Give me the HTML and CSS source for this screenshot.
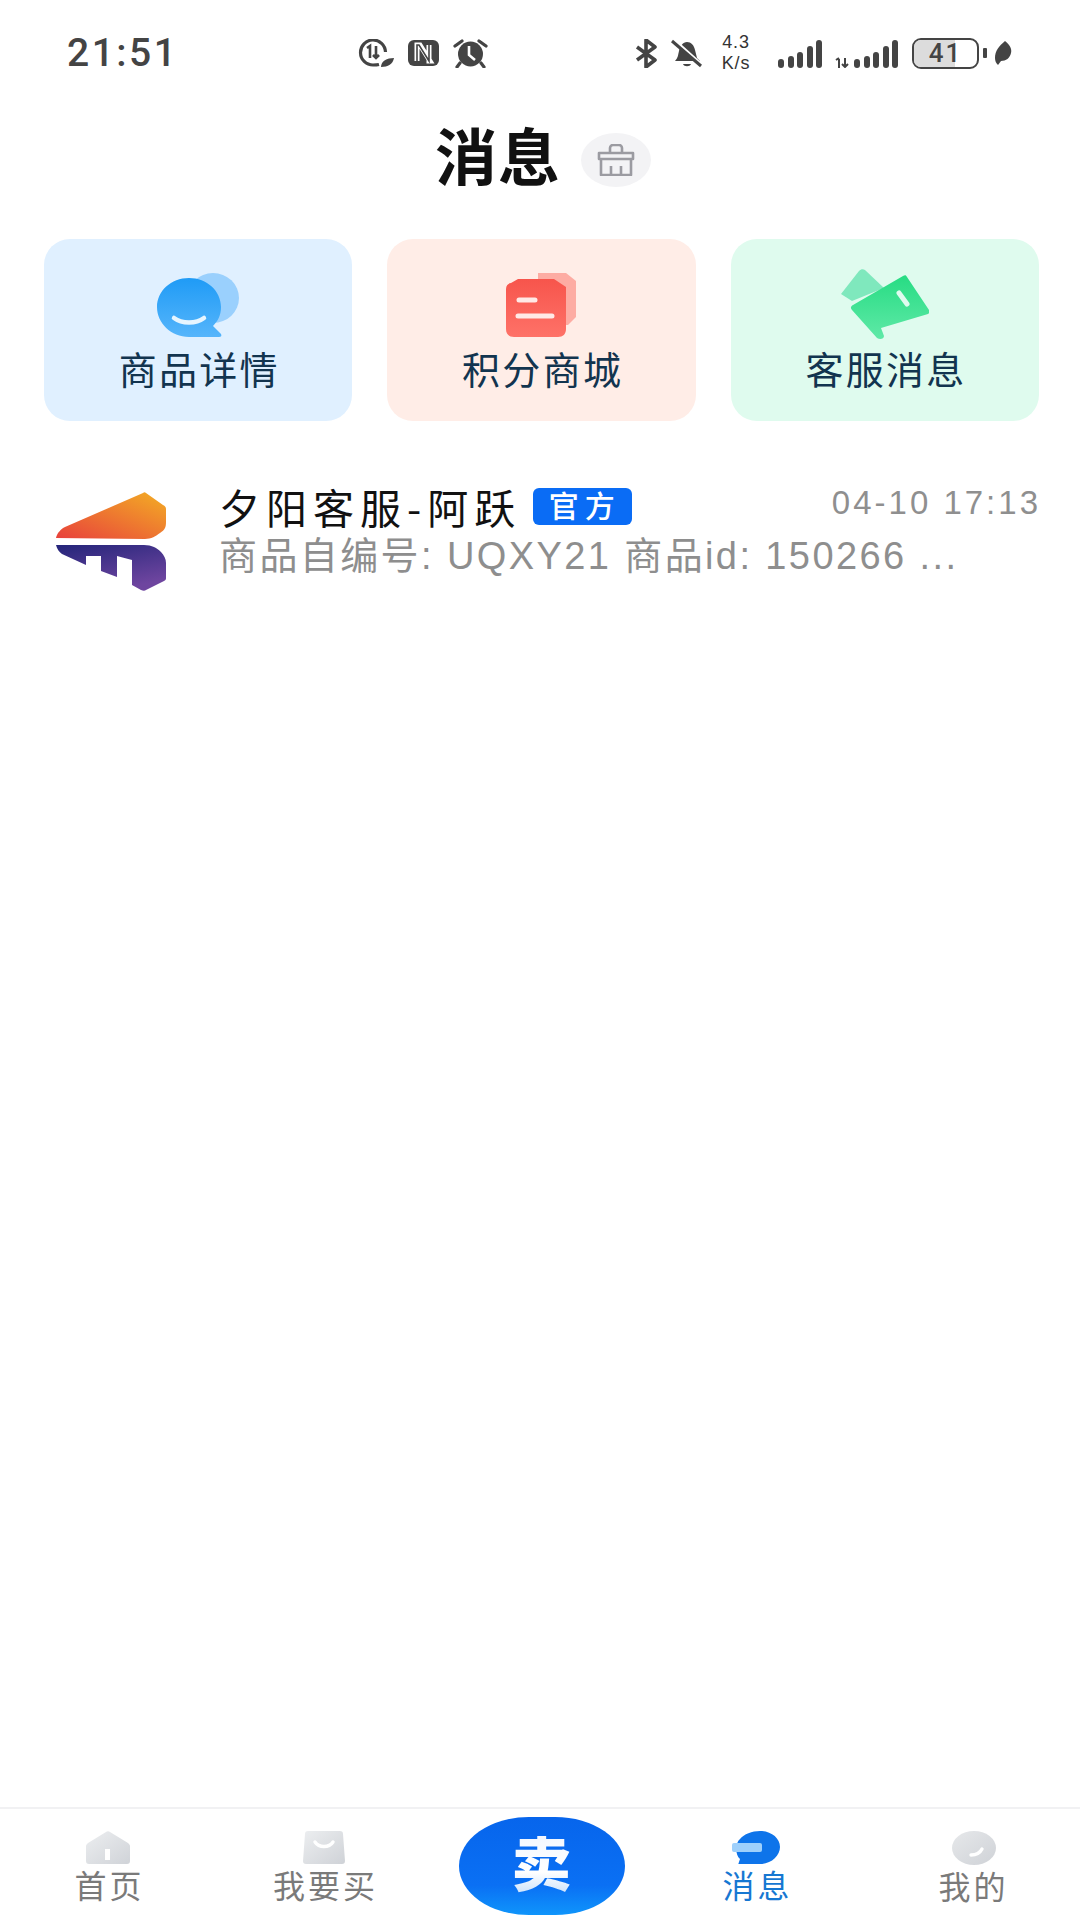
FILE: index.html
```html
<!DOCTYPE html>
<html lang="zh-CN">
<head>
<meta charset="utf-8">
<title>消息</title>
<link rel="stylesheet" href="styles.css">
</head>
<body>
<div class="app">
  <header class="status">
    <span class="clock">21:51</span>
    <div class="status-mid">
      <svg class="si" width="37" height="28" viewBox="0 0 37 28"><path d="M22 25.5C20 26 18 26 16 26A12.5 12.5 0 1 1 28.500 13" fill="none" stroke="#444" stroke-width="3.200"/><path d="M10 9l3-2v12M19 7v12m-3-3l3 3 3-3" fill="none" stroke="#444" stroke-width="2.600"/><path d="M24 28c0-6 6-9 13-9-1 6-6 9-13 9z" fill="#444"/></svg>
      <svg class="si" width="31" height="26" viewBox="0 0 31 26"><rect width="31" height="26" rx="6" fill="#444"/><path d="M9 21V5h3l10 16h-1V5" fill="none" stroke="#fff" stroke-width="5"/><path d="M9 21V5h2l10 16V5" fill="none" stroke="#444" stroke-width="1.600"/></svg>
      <svg class="si" width="35" height="29" viewBox="0 0 35 29"><circle cx="17.500" cy="15" r="12.500" fill="#444"/><path d="M16 7v9l6 5" fill="none" stroke="#fff" stroke-width="2.600"/><path d="M2 7l7-5M33 7l-7-5M7 24l-3 4M28 24l3 4" stroke="#444" stroke-width="3.200" stroke-linecap="round"/></svg>
    </div>
    <div class="status-right">
      <svg class="si" width="23" height="29" viewBox="0 0 23 29"><path d="M2 21L20 8 11 1v27l9-7L2 8" fill="none" stroke="#444" stroke-width="3.600" stroke-linejoin="round"/></svg>
      <svg class="si bell" width="31" height="29" viewBox="0 0 31 29"><path d="M4 22c3-3 3-6 4-10 1-5 4-9 8-9s7 3 8 8l2 8 3 3z" fill="#444"/><path d="M12 25h8c-1 3-7 3-8 0z" fill="#444"/><path d="M1 -1l29 26" stroke="#fff" stroke-width="3"/><path d="M1 2l29 25" stroke="#444" stroke-width="3"/></svg>
      <div class="speed"><span>4.3</span><span>K/s</span></div>
      <div class="bars"><i class="h1"></i><i class="h2"></i><i class="h3"></i><i class="h4"></i><i class="h5"></i></div>
      <div class="sig2">
        <svg class="si" width="15" height="11" viewBox="0 0 15 11"><path d="M4 2v9M1 3l3-2M10 1v9m-3-3l3 3 3-3" fill="none" stroke="#444" stroke-width="2"/></svg>
        <div class="bars"><i class="h1"></i><i class="h2"></i><i class="h3"></i><i class="h4"></i><i class="h5"></i></div>
      </div>
      <div class="battery"><div class="batt-fill"></div><span class="batt-num">41</span></div>
      <span class="batt-cap"></span>
      <svg class="si" width="18" height="24" viewBox="0 0 18 24"><path d="M11 0c5 4 7 8 6 12-1 5-5 8-10 8l-3 4c-2-2-3-4-3-7C1 10 5 5 11 0z" fill="#444"/></svg>
    </div>
  </header>

  <div class="title-row">
    <h1 class="title">消息</h1>
    <div class="basket">
      <svg width="38" height="32" viewBox="0 0 38 32"><path d="M13 9V4a3 3 0 0 1 3-3h6a3 3 0 0 1 3 3v5M2 9h34v6H2zM4 15v16h30V15M14 31v-9M24 31v-9" fill="none" stroke="#9b9ba1" stroke-width="2.600" stroke-linejoin="round"/></svg>
    </div>
  </div>

  <section class="cards">
    <div class="card card-blue">
      <svg class="card-icon" width="82" height="64" viewBox="0 0 82 64">
        <defs>
          <linearGradient id="gb" x1="0" y1="0" x2="0" y2="1"><stop offset="0" stop-color="#1f9bf6"/><stop offset="1" stop-color="#56b5fb"/></linearGradient>
        </defs>
        <ellipse cx="56" cy="25" rx="26" ry="25" fill="#9ad0fd"/>
        <path d="M32 5c18 0 32 13 32 29 0 8-3 14-8 19l8 8c1 2 0 3-2 3H32C14 64 0 50 0 34 0 18 14 5 32 5z" fill="url(#gb)"/>
        <path d="M17 45c8 6 22 6 30 0" fill="none" stroke="#e6f5ff" stroke-width="4.500" stroke-linecap="round"/>
      </svg>
      <span class="card-label">商品详情</span>
    </div>
    <div class="card card-red">
      <svg class="card-icon" width="70" height="64" viewBox="0 0 70 64">
        <defs>
          <linearGradient id="gr" x1="0" y1="0" x2="0" y2="1"><stop offset="0" stop-color="#f7554c"/><stop offset="1" stop-color="#fe7268"/></linearGradient>
        </defs>
        <path d="M32 0h28l10 8v36l-8 8H32z" fill="#fdaca3"/>
        <path d="M12 6h36l12 8v42c0 5-3 8-8 8H8c-5 0-8-3-8-8V16c0-4 3-6 5-6z" fill="url(#gr)"/>
        <path d="M13 27h16M12 43h34" stroke="#ffe9e6" stroke-width="5" stroke-linecap="round"/>
      </svg>
      <span class="card-label">积分商城</span>
    </div>
    <div class="card card-green">
      <svg class="card-icon card-icon-green" width="88" height="72" viewBox="0 0 88 72">
        <defs>
          <linearGradient id="gg" x1="0" y1="0" x2="0" y2="1"><stop offset="0" stop-color="#27dc83"/><stop offset="1" stop-color="#5fe9a7"/></linearGradient>
        </defs>
        <path d="M0 26L18 3c2-2 4-2 6-1l19 18-32 13z" fill="#7fe8bd"/>
        <path d="M12 37L62 8c2-1 3-1 4 1l22 33c1 2 1 3-1 4L40 60l3 8c0 3-4 4-7 2L11 42c-2-2-1-4 1-5z" fill="url(#gg)"/>
        <path d="M58 25l8 11" stroke="#dffbef" stroke-width="5" stroke-linecap="round"/>
      </svg>
      <span class="card-label">客服消息</span>
    </div>
  </section>

  <section class="list">
    <article class="row">
      <svg class="logo" width="112" height="100" viewBox="0 -1 112 100">
        <defs>
          <linearGradient id="lu" x1="0" y1="1" x2="1" y2="0"><stop offset="0" stop-color="#e8403c"/><stop offset="1" stop-color="#f3ae24"/></linearGradient>
          <linearGradient id="ll" x1="0" y1="0" x2="0.5" y2="1"><stop offset="0" stop-color="#24257a"/><stop offset="1" stop-color="#6e459f"/></linearGradient>
        </defs>
        <path d="M1 45C2 40 6 36 10 34L88 0c1-1 2-1 3 0l17 12c2 1 3 2 3 4v13c0 5-1 8-6 11-4 3-9 6-15 6z" fill="url(#lu)"/>
        <path d="M1 52h88c8 0 13 3 17 7 3 3 5 7 5 11v15c0 1 0 2-2 3L91 97c-1 1-3 1-5 0l-9-5V67l-15-4v21l-16-6V63H31v9L7 61c-3-2-5-5-6-9z" fill="url(#ll)"/>
      </svg>
      <div class="row-body">
        <div class="row-top">
          <span class="name">夕阳客服-阿跃</span>
          <span class="badge">官方</span>
          <span class="time">04-10 17:13</span>
        </div>
        <p class="preview">商品自编号: UQXY21 商品id: 150266 ...</p>
      </div>
    </article>
  </section>

  <nav class="tabs">
    <div class="tab">
      <svg width="44" height="33" viewBox="0 0 44 33">
        <defs><linearGradient id="gt" x1="0" y1="0" x2="1" y2="1"><stop offset="0" stop-color="#eceef0"/><stop offset="1" stop-color="#d0d3d8"/></linearGradient></defs>
        <path d="M2 12L20 1c1-1 3-1 4 0l18 11c1 1 2 2 2 3v15c0 2-1 3-3 3H3c-2 0-3-1-3-3V15c0-1 1-2 2-3z" fill="url(#gt)"/>
        <rect x="19" y="18" width="5" height="11" fill="#fff"/>
      </svg>
      <span class="tab-label">首页</span>
    </div>
    <div class="tab">
      <svg width="42" height="33" viewBox="0 0 42 33">
        <defs><linearGradient id="gt2" x1="0" y1="0" x2="1" y2="1"><stop offset="0" stop-color="#eceef0"/><stop offset="1" stop-color="#cfd2d7"/></linearGradient></defs>
        <path d="M5 0h32c2 0 3 1 3 3l2 27c0 2-1 3-3 3H3c-2 0-3-1-3-3L2 3c0-2 1-3 3-3z" fill="url(#gt2)"/>
        <path d="M12 11c4 6 14 6 18 0" fill="none" stroke="#fff" stroke-width="3.400" stroke-linecap="round"/>
      </svg>
      <span class="tab-label">我要买</span>
    </div>
    <div class="tab">
      <div class="sell"><span class="sell-text">卖</span></div>
    </div>
    <div class="tab">
      <svg width="48" height="33" viewBox="0 0 48 33">
        <path d="M28 0c11 0 20 7 20 16s-9 17-20 17H10l-4 1 2-6C3 24 3 12 8 8c4-5 12-8 20-8z" fill="#0e74ea"/>
        <rect x="0" y="12" width="30" height="9" rx="2" fill="#9fd0fb"/>
      </svg>
      <span class="tab-label active">消息</span>
    </div>
    <div class="tab tab-me">
      <svg width="44" height="34" viewBox="0 0 44 34">
        <defs><linearGradient id="gt3" x1="0" y1="0" x2="1" y2="1"><stop offset="0" stop-color="#e6e8ea"/><stop offset="1" stop-color="#cfd2d7"/></linearGradient></defs>
        <ellipse cx="22" cy="17" rx="22" ry="17" fill="url(#gt3)"/>
        <path d="M19 24c5 0 9-2 11-6" fill="none" stroke="#fff" stroke-width="3.400" stroke-linecap="round"/>
      </svg>
      <span class="tab-label">我的</span>
    </div>
  </nav>
</div>
</body>
</html>
```

FILE: styles.css
```css
* { box-sizing: border-box; }
html, body { margin: 0; padding: 0; background: #fff; }
body { font-family: "Liberation Sans", "Noto Sans CJK SC", sans-serif; }
.app { width: 1080px; height: 1920px; display: flex; flex-direction: column; overflow: hidden; }

.status { height: 104px; padding: 2px 68px 0 67px; display: flex; align-items: center; color: #444; flex: none; }
.clock { font-family: Roboto, sans-serif; font-weight: 500; font-size: 39px; letter-spacing: 2.500px; width: 292px; }
.status-mid { display: flex; align-items: center; gap: 14px; width: 279px; }
.status-right { display: flex; align-items: center; }
.si { display: block; flex: none; }
.bell { margin-left: 13px; }
.speed { display: flex; flex-direction: column; align-items: center; font-family: "Liberation Sans", sans-serif; font-size: 18px; line-height: 21px; width: 38px; margin: 0 23px 0 15px; letter-spacing: .8px; color: #333; }
.bars { display: flex; align-items: flex-end; gap: 3.500px; height: 29px; }
.bars i { display: block; width: 6px; background: #444; border-radius: 3px; }
.h1 { height: 9px; }
.h2 { height: 12px; }
.h3 { height: 16px; }
.h4 { height: 22px; }
.h5 { height: 28px; }
.sig2 { display: flex; align-items: flex-end; gap: 4px; margin-left: 13px; }
.battery { position: relative; margin-left: 14px; width: 67px; height: 31px; border: 2.500px solid #444; border-radius: 9px; overflow: hidden; display: flex; align-items: center; justify-content: center; }
.batt-fill { position: absolute; left: 0; top: 0; bottom: 0; width: 41px; background: #dcdcdc; }
.batt-num { position: relative; font-family: Roboto, sans-serif; font-weight: 500; font-size: 26px; letter-spacing: 2px; color: #444; }
.batt-cap { width: 4px; height: 10px; background: #444; border-radius: 1px; margin: 0 7px 0 4px; }

.title-row { height: 100px; flex: none; display: flex; align-items: center; justify-content: center; padding: 12px 0 0 6px; gap: 20px; }
.title { margin: 0; font-size: 62px; font-weight: 700; line-height: 1; letter-spacing: 1px; color: #111; }
.basket { width: 70px; height: 54px; border-radius: 50%; background: #f3f3f5; display: flex; align-items: center; justify-content: center; }

.cards { flex: none; margin-top: 35px; padding: 0 41px 0 44px; display: grid; grid-template-columns: repeat(3, 1fr); gap: 35px; }
.card { height: 182px; border-radius: 26px; display: flex; flex-direction: column; align-items: center; justify-content: flex-end; padding-bottom: 30px; }
.card-blue { background: #e0f0ff; }
.card-red { background: #ffede7; }
.card-green { background: #dffbee; }
.card-icon { display: block; margin-bottom: 14px; }
.card-icon-green { margin-bottom: 11px; }
.card-label { font-size: 38px; line-height: 40px; letter-spacing: 2.300px; margin-right: -2.300px; color: #12344f; }

.list { flex: 1; padding: 61px 41px 0 55px; }
.row { display: flex; align-items: flex-start; }
.logo { display: block; flex: none; margin-top: 10px; }
.row-body { flex: 1; margin-left: 52px; min-width: 0; }
.row-top { display: flex; align-items: center; height: 41px; margin-top: 4px; }
.name { font-family: "Noto Sans CJK SC", sans-serif; font-size: 41px; line-height: 41px; letter-spacing: 6px; color: #111; white-space: nowrap; }
.badge { margin-left: 12px; width: 99px; height: 37px; background: #0a6cf5; color: #fff; border-radius: 6px; font-size: 30px; font-weight: 500; line-height: 37px; letter-spacing: 6px; text-align: center; padding-left: 4px; }
.time { margin-left: auto; margin-right: -2px; font-size: 33px; letter-spacing: 3px; color: #8f8f8f; white-space: nowrap; transform: translateY(-4px); }
.preview { margin: 7px 0 0; font-size: 38px; line-height: 44px; letter-spacing: 2.400px; color: #8e8e8e; white-space: nowrap; }

.tabs { flex: none; height: 113px; border-top: 2px solid #f1f1f3; display: grid; grid-template-columns: repeat(5, 1fr); }
.tab { display: flex; flex-direction: column; align-items: center; padding-top: 22px; }
.tab svg { display: block; flex: none; }
.tab-me svg { margin-left: 4px; }
.tab-label { margin-top: 4px; font-size: 32px; line-height: 38px; color: #7a7a7a; white-space: nowrap; letter-spacing: 3px; margin-right: -3px; }
.tab-label.active { color: #1677d2; }
.sell { margin: -14px 0 0 3px; width: 166px; height: 98px; border-radius: 42% / 50%; background: linear-gradient(180deg, #0765ec 0%, #0a70f4 70%, #0f95fb 100%); display: flex; align-items: center; justify-content: center; }
.sell-text { font-size: 60px; font-weight: 900; line-height: 1; background: linear-gradient(180deg, #f2f7ff, #ffffff 60%, #c8e0fb); -webkit-background-clip: text; background-clip: text; color: transparent; }
```
